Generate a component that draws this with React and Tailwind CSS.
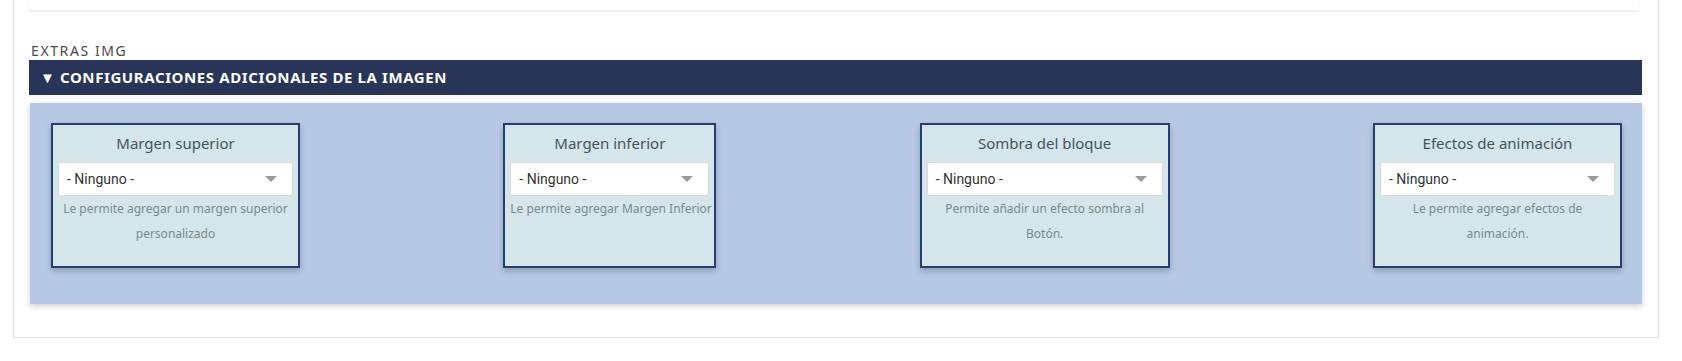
const FIELDS = [
  { title: 'Margen superior', help: ['Le permite agregar un margen superior', 'personalizado'], width: 'w-[249px]' },
  { title: 'Margen inferior', help: ['Le permite agregar Margen Inferior'], width: 'w-[213px]' },
  { title: 'Sombra del bloque', help: ['Permite añadir un efecto sombra al', 'Botón.'], width: 'w-[250px]' },
  { title: 'Efectos de animación', help: ['Le permite agregar efectos de', 'animación.'], width: 'w-[249px]' },
]

function SelectBox() {
  return (
    <div className="flex items-center justify-between h-[34px] bg-white border border-[#dcdcdc] rounded-[2px] pl-[8px] pr-[15px]">
      <span className="text-[14px] text-[#333] font-['Roboto',sans-serif]">- Ninguno -</span>
      <svg width="12" height="7" viewBox="0 0 12 7">
        <path d="M0 0 L12 0 L6 6 Z" fill="#999" />
      </svg>
    </div>
  )
}

function FieldCard({ title, help, width }) {
  return (
    <div className={`${width} bg-[#d4e6e9] border-2 border-[#233f6f] px-[5px] pt-[6px] pb-[20px] shadow-[0_3px_6px_rgba(0,0,0,0.22)]`}>
      <p className="text-center text-[15px] leading-[24px] text-[#48535c] mb-[7px]">{title}</p>
      <SelectBox />
      <div className="text-center text-[12px] leading-[25px] text-[#7b8991] whitespace-nowrap">
        {help.map((line) => (
          <p key={line}>{line}</p>
        ))}
      </div>
    </div>
  )
}

export default function App() {
  return (
    <div className="w-[1682px] h-[361px] bg-white font-['Noto_Sans',sans-serif]">
      <div className="ml-[13px] mr-[23px] h-[338px] border-x border-b border-[#dedede] pl-[15px] pr-[16px]">
        {/* previous block edge */}
        <div className="h-[10px] mr-[3px] bg-white shadow-[0_2px_3px_rgba(0,0,0,0.07)]" />

        {/* section label */}
        <p className="mt-[31px] text-[14px] leading-[19px] tracking-[1.6px] text-[#4a4a4a] pl-[2px]">EXTRAS IMG</p>

        {/* header bar */}
        <div className="h-[35px] bg-[#283558] flex items-center pl-[11px]">
          <span className="text-white text-[15px] font-bold tracking-[0.6px]">▼ CONFIGURACIONES ADICIONALES DE LA IMAGEN</span>
        </div>

        {/* panel */}
        <div className="mt-[8px] ml-[1px] bg-[#b7c8e5] pt-[20px] pb-[36px] pl-[21px] pr-[20px] shadow-[0_2px_6px_rgba(0,0,0,0.2)] flex justify-between items-stretch">
          {FIELDS.map((f) => (
            <FieldCard key={f.title} {...f} />
          ))}
        </div>
      </div>
    </div>
  )
}
